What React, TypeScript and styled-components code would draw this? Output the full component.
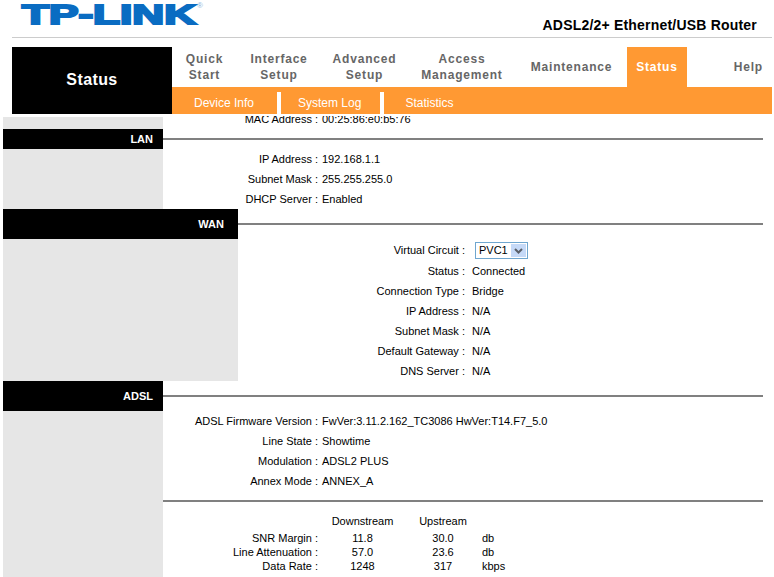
import React from 'react';
import styled, {createGlobalStyle} from 'styled-components';

const GlobalStyle = createGlobalStyle`
  html, body {
    margin: 0;
    padding: 0;
    background: #fff;
  }
  body {
    font-family: "Liberation Sans", Arial, sans-serif;
    font-size: 11px;
    color: #000;
  }
`;

const Page = styled.div`
  width: 774px;
  height: 577px;
  overflow: hidden;
`;

const Brand = styled.header`
  height: 37px;
  display: flex;
  justify-content: space-between;
  border-bottom: 1px solid #ccc;
  margin: 0 2px 9px 12px;
`;

const Logo = styled.svg`
  display: block;
  width: 200px;
  height: 37px;
`;

const Tagline = styled.div`
  font-size: 14px;
  font-weight: bold;
  letter-spacing: 0.2px;
  line-height: 16px;
  padding: 17px 15px 0 0;
`;

const Nav = styled.nav`
  display: flex;
  margin: 0 2px 0 12px;
  height: 67px;
`;

const NavTitle = styled.div`
  width: 160px;
  background: #000;
  color: #fff;
  font-size: 16px;
  font-weight: bold;
  letter-spacing: 0.4px;
  display: flex;
  align-items: center;
  justify-content: center;
  padding-bottom: 2px;
  box-sizing: border-box;
`;

const NavRight = styled.div`
  flex: 1;
  display: flex;
  flex-direction: column;
`;

const Tabs = styled.div`
  height: 40px;
  display: flex;
`;

const Tab = styled.div<{$width: number; $active?: boolean}>`
  width: ${p => p.$width}px;
  display: flex;
  align-items: center;
  justify-content: center;
  text-align: center;
  font-size: 12px;
  font-weight: bold;
  line-height: 16px;
  letter-spacing: 0.8px;
  color: ${p => (p.$active ? '#fff' : '#666')};
  background: ${p => (p.$active ? '#f93' : 'transparent')};
`;

const HelpTab = styled(Tab)`
  justify-content: flex-end;
  padding-right: 9px;
  box-sizing: border-box;
`;

const SubNav = styled.div`
  height: 27px;
  background: #f93;
  display: flex;
  align-items: flex-end;
`;

const SubItem = styled.div<{$left: number; $right: number; $bar?: boolean}>`
  height: 22px;
  line-height: 23px;
  font-size: 12px;
  color: #fff;
  padding: 0 ${p => p.$right}px 0 ${p => p.$left}px;
  border-right: ${p => (p.$bar ? '4px solid #fff' : 'none')};
`;

const Viewport = styled.main`
  padding-left: 3px;
`;

const Scrolled = styled.div`
  display: flex;
  height: 15px;
`;

const ScrolledSide = styled.div`
  width: 160px;
  margin-top: 3px;
  background: #e6e6e6;
`;

const ScrolledMain = styled.div`
  flex: 1;
  margin-top: 2px;
  overflow: hidden;
  & > div {
    margin-top: -7px;
  }
`;

const Section = styled.section`
  display: flex;
  flex-direction: column;
`;

const SectionHead = styled.div<{$tall?: boolean}>`
  display: flex;
  align-items: center;
  height: ${p => (p.$tall ? 30 : 20)}px;
`;

const HeadLabel = styled.div<{$width: number; $pad: number}>`
  width: ${p => p.$width}px;
  height: 100%;
  box-sizing: border-box;
  background: #000;
  color: #fff;
  font-weight: bold;
  font-size: 11px;
  display: flex;
  align-items: center;
  justify-content: flex-end;
  padding-right: ${p => p.$pad}px;
`;

const Rule = styled.div`
  flex: 1;
  height: 2px;
  background: #808080;
  margin-right: 11px;
`;

const SectionBody = styled.div`
  display: flex;
`;

const Side = styled.div<{$width: number}>`
  width: ${p => p.$width}px;
  flex: none;
  background: #e6e6e6;
`;

const Rows = styled.div`
  flex: 1;
`;

const Row = styled.div<{$label: number; $gap: number; $height?: number}>`
  display: grid;
  grid-template-columns: ${p => p.$label}px 1fr;
  column-gap: ${p => p.$gap}px;
  align-items: center;
  height: ${p => p.$height ?? 20}px;
  white-space: nowrap;
`;

const Label = styled.div`
  text-align: right;
`;

const Divider = styled.div`
  display: flex;
  align-items: center;
  height: 20px;
`;

const SelectBox = styled.div`
  display: inline-flex;
  align-items: center;
  justify-content: space-between;
  width: 53px;
  height: 17px;
  margin: 1px 0 0 3px;
  box-sizing: border-box;
  border: 1px solid #6fa6cf;
  padding: 0 1px 1px 3px;
`;

const SelectArrow = styled.span`
  width: 15px;
  height: 13px;
  margin-top: 1px;
  background: #c5d9f7;
  display: flex;
  align-items: center;
  justify-content: center;
`;

const Stats = styled.div`
  display: grid;
  grid-template-columns: 155px 89px 72px 1fr;
  grid-template-rows: 20px repeat(3, 14px);
  align-items: center;
  padding-bottom: 4px;
`;

const StatValue = styled.div`
  text-align: center;
`;

const StatUnit = styled.div`
  padding-left: 3px;
`;

const lan = [
  ['IP Address :', '192.168.1.1'],
  ['Subnet Mask :', '255.255.255.0'],
  ['DHCP Server :', 'Enabled'],
];

const wan = [
  ['Status', 'Connected'],
  ['Connection Type', 'Bridge'],
  ['IP Address', 'N/A'],
  ['Subnet Mask', 'N/A'],
  ['Default Gateway', 'N/A'],
  ['DNS Server', 'N/A'],
];

const adsl = [
  ['ADSL Firmware Version :', 'FwVer:3.11.2.162_TC3086 HwVer:T14.F7_5.0'],
  ['Line State :', 'Showtime'],
  ['Modulation :', 'ADSL2 PLUS'],
  ['Annex Mode :', 'ANNEX_A'],
];

const stats = [
  ['SNR Margin :', '11.8', '30.0', 'db'],
  ['Line Attenuation :', '57.0', '23.6', 'db'],
  ['Data Rate :', '1248', '317', 'kbps'],
];

const tabs = [
  {width: 65, lines: ['Quick', 'Start']},
  {width: 84, lines: ['Interface', 'Setup']},
  {width: 87, lines: ['Advanced', 'Setup']},
  {width: 108, lines: ['Access', 'Management']},
  {width: 111, lines: ['Maintenance']},
];

function App() {
  return (
    <Page>
      <GlobalStyle/>
      <Brand>
        <Logo viewBox="0 0 200 37">
          <text x="10" y="24" fontFamily="Liberation Sans" fontWeight="bold" fontSize="27"
                fill="#0a6cc2" stroke="#0a6cc2" strokeWidth="2"
                textLength="174" lengthAdjust="spacingAndGlyphs">TP-LINK</text>
          <text x="185" y="8" fontFamily="Liberation Sans" fontSize="8" fill="#8fb8de">®</text>
        </Logo>
        <Tagline>ADSL2/2+ Ethernet/USB Router</Tagline>
      </Brand>
      <Nav>
        <NavTitle>Status</NavTitle>
        <NavRight>
          <Tabs>
            {tabs.map(tab => (
              <Tab key={tab.lines[0]} $width={tab.width}>
                <span>{tab.lines[0]}{tab.lines[1] && <br/>}{tab.lines[1]}</span>
              </Tab>
            ))}
            <Tab $width={60} $active>Status</Tab>
            <HelpTab $width={85}>Help</HelpTab>
          </Tabs>
          <SubNav>
            <SubItem $left={22} $right={23} $bar>Device Info</SubItem>
            <SubItem $left={17} $right={19} $bar>System Log</SubItem>
            <SubItem $left={21} $right={0}>Statistics</SubItem>
          </SubNav>
        </NavRight>
      </Nav>
      <Viewport>
        <Scrolled>
          <ScrolledSide/>
          <ScrolledMain>
            <Row $label={155} $gap={4}>
              <Label>MAC Address :</Label>
              <div>00:25:86:e0:b5:76</div>
            </Row>
          </ScrolledMain>
        </Scrolled>
        <Section>
          <SectionHead>
            <HeadLabel $width={160} $pad={10}>LAN</HeadLabel>
            <Rule/>
          </SectionHead>
          <SectionBody>
            <Side $width={160}/>
            <Rows>
              {lan.map(([label, value]) => (
                <Row key={label} $label={155} $gap={4}>
                  <Label>{label}</Label>
                  <div>{value}</div>
                </Row>
              ))}
            </Rows>
          </SectionBody>
        </Section>
        <Section>
          <SectionHead $tall>
            <HeadLabel $width={235} $pad={14}>WAN</HeadLabel>
            <Rule/>
          </SectionHead>
          <SectionBody>
            <Side $width={235}/>
            <Rows>
              <Row $label={227} $gap={7} $height={22}>
                <Label>Virtual Circuit :</Label>
                <SelectBox>
                  PVC1
                  <SelectArrow>
                    <svg width="9" height="6" viewBox="0 0 9 6">
                      <path d="M1 1l3.5 3.5L8 1" fill="none" stroke="#5a5f68" strokeWidth="2"/>
                    </svg>
                  </SelectArrow>
                </SelectBox>
              </Row>
              {wan.map(([label, value]) => (
                <Row key={label} $label={227} $gap={7}>
                  <Label>{label} :</Label>
                  <div>{value}</div>
                </Row>
              ))}
            </Rows>
          </SectionBody>
        </Section>
        <Section>
          <SectionHead $tall>
            <HeadLabel $width={160} $pad={10}>ADSL</HeadLabel>
            <Rule/>
          </SectionHead>
          <SectionBody>
            <Side $width={160}/>
            <Rows>
              {adsl.map(([label, value]) => (
                <Row key={label} $label={155} $gap={4}>
                  <Label>{label}</Label>
                  <div>{value}</div>
                </Row>
              ))}
              <Divider><Rule/></Divider>
              <Stats>
                <div/>
                <StatValue>Downstream</StatValue>
                <StatValue>Upstream</StatValue>
                <div/>
                {stats.map(([label, down, up, unit]) => (
                  <React.Fragment key={label}>
                    <Label>{label}</Label>
                    <StatValue>{down}</StatValue>
                    <StatValue>{up}</StatValue>
                    <StatUnit>{unit}</StatUnit>
                  </React.Fragment>
                ))}
              </Stats>
            </Rows>
          </SectionBody>
        </Section>
      </Viewport>
    </Page>
  );
}

export default App;
